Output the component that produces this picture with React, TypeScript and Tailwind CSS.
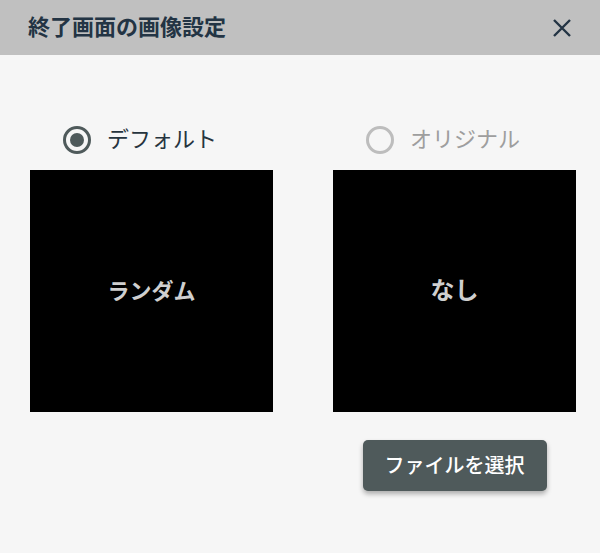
import React from "react";

const font = { fontFamily: '"Roboto", "Noto Sans CJK JP", sans-serif' };

function Radio({ checked, label }: { checked: boolean; label: string }) {
  return (
    <div className="flex h-[40px] items-center gap-[16px] pl-[33px]">
      <div
        className={
          checked
            ? "flex h-[28px] w-[28px] items-center justify-center rounded-full border-[3px] border-[#4f5a5b]"
            : "flex h-[28px] w-[28px] items-center justify-center rounded-full border-[3px] border-[#bdbdbd]"
        }
      >
        {checked && <div className="h-[14px] w-[14px] rounded-full bg-[#4f5a5b]" />}
      </div>
      <span
        className={
          checked
            ? "text-[22px] leading-none text-[#26343e]"
            : "text-[22px] leading-none text-[#9e9e9e]"
        }
      >
        {label}
      </span>
    </div>
  );
}

export default function App() {
  return (
    <div className="flex h-[553px] w-[600px] flex-col bg-[#f6f6f6]" style={font}>
      <div className="flex h-[55px] items-center justify-between bg-[#c0c0c0] pl-[28px] pr-[28px]">
        <span className="text-[22px] font-bold leading-none text-[#233444]">終了画面の画像設定</span>
        <svg width="20" height="20" viewBox="0 0 20 20">
          <path d="M2 2 L18 18 M18 2 L2 18" stroke="#233444" strokeWidth="2.4" strokeLinecap="butt" />
        </svg>
      </div>
      <div className="flex gap-[60px] pl-[30px] pt-[65px]">
        <div className="flex w-[243px] flex-col">
          <Radio checked label="デフォルト" />
          <div className="mt-[10px] flex h-[242px] w-[243px] items-center justify-center bg-black">
            <span className="text-[22px] font-bold text-[#cfcfcf]">ランダム</span>
          </div>
        </div>
        <div className="flex w-[243px] flex-col">
          <Radio checked={false} label="オリジナル" />
          <div className="mt-[10px] flex h-[242px] w-[243px] items-center justify-center bg-black">
            <span className="text-[24px] font-bold text-[#cfcfcf]">なし</span>
          </div>
          <button className="mt-[28px] flex h-[51px] w-[184px] items-center justify-center self-center rounded-[5px] bg-[#4f5a5b] text-[20px] font-medium text-white shadow-[0_3px_5px_rgba(0,0,0,0.3)]">
            ファイルを選択
          </button>
        </div>
      </div>
    </div>
  );
}
